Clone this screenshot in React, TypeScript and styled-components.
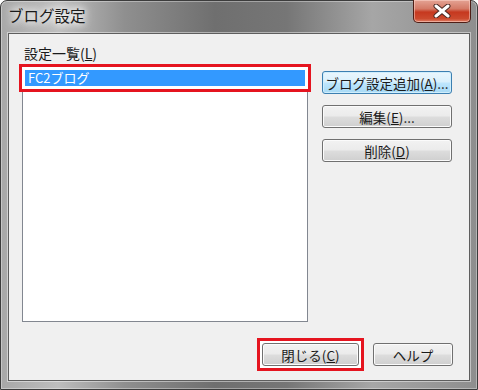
import styled, { createGlobalStyle, css } from "styled-components";

const GlobalStyle = createGlobalStyle`
  body {
    margin: 0;
    font-family: "Noto Sans CJK JP", "Noto Sans", sans-serif;
  }
`;

const Window = styled.div`
  width: 478px;
  height: 390px;
  box-sizing: border-box;
  display: flex;
  flex-direction: column;
  padding: 0 7px 8px;
  border: 1px solid #3c3c3c;
  border-radius: 7px 7px 0 0;
  background: linear-gradient(
    to right,
    #a8a8a8 0%,
    #bdbdbd 12%,
    #8f8f8f 26%,
    #6f6f6f 45%,
    #767676 60%,
    #a6a6a6 78%,
    #8e8e8e 100%
  );
  box-shadow: inset 0 0 0 1px rgba(255, 255, 255, 0.35);
`;

const TitleBar = styled.div`
  height: 32px;
  display: flex;
  justify-content: space-between;
  align-items: flex-start;
`;

const Title = styled.div`
  font-size: 15.5px;
  line-height: 18px;
  padding-top: 5px;
  color: #1a1a1a;
  text-shadow: 0 0 6px #fff, 0 0 10px #fff, 0 0 14px #fff;
`;

const CloseButton = styled.div`
  width: 58px;
  height: 23px;
  margin-top: -1px;
  margin-right: -1px;
  box-sizing: border-box;
  display: flex;
  align-items: center;
  justify-content: center;
  border: 1px solid #4e1e16;
  border-top: none;
  border-radius: 0 0 5px 5px;
  background: linear-gradient(#e4a394 0%, #d47a66 40%, #c6381f 55%, #cc4a2e 85%, #e0826a 100%);
  box-shadow: inset 0 0 0 1px rgba(255, 220, 210, 0.5);
`;

const Client = styled.div`
  flex: 1;
  display: flex;
  flex-direction: column;
  background: #f0f0f0;
  border: 1px solid #5e5e5e;
  padding: 11px 16px 14px 13px;
  box-shadow: 0 0 0 1px rgba(255, 255, 255, 0.45);
`;

const Label = styled.div`
  font-size: 14px;
  line-height: 16px;
  padding-left: 2px;
  margin-bottom: 5px;
  color: #1a1a1a;
`;

const Mnemonic = styled.span`
  text-decoration: underline;
`;

const Body = styled.div`
  display: flex;
  gap: 14px;
`;

const ListBox = styled.div`
  width: 286px;
  height: 256px;
  box-sizing: border-box;
  background: #fff;
  border: 1px solid #828790;
  padding: 3px 2px;
`;

/* red annotation frame drawn over the screenshot */
const Marker = styled.div<{ $gap: number }>`
  border: 3px solid #e5141f;
  padding: ${({ $gap }) => $gap}px;
  margin: ${({ $gap }) => -($gap + 3)}px;
  background: #fff;
`;

const ListItem = styled.div<{ $selected?: boolean }>`
  height: 16px;
  font-size: 13px;
  line-height: 16px;
  padding-left: 3px;
  color: #111;
  ${({ $selected }) =>
    $selected &&
    css`
      background: #3399ff;
      color: #fff;
    `}
`;

const ButtonColumn = styled.div`
  display: flex;
  flex-direction: column;
  gap: 11px;
  margin-top: 5px;
`;

const Button = styled.div<{ $width: number; $default?: boolean }>`
  width: ${({ $width }) => $width}px;
  height: 23px;
  box-sizing: border-box;
  display: flex;
  align-items: center;
  justify-content: center;
  font-size: 13.5px;
  color: #1a1a1a;
  border: 1px solid #707070;
  border-radius: 3px;
  background: linear-gradient(#f2f2f2 0%, #ebebeb 48%, #dddddd 52%, #cfcfcf 100%);
  box-shadow: inset 0 0 0 1px #fbfbfb;
  white-space: nowrap;
  ${({ $default }) =>
    $default &&
    css`
      border-color: #3c7fb1;
      background: linear-gradient(#eaf6fd 0%, #d9f0fc 48%, #bee6fd 52%, #a7d9f5 100%);
      box-shadow: inset 0 0 0 1px #d0eefc;
    `}
`;

const Footer = styled.div`
  display: flex;
  justify-content: flex-end;
  align-items: center;
  gap: 14px;
  margin-top: 21px;
`;

const CloseIcon = () => (
  <svg width="18" height="14" viewBox="0 0 18 14">
    <path d="M3 2 L15 12 M15 2 L3 12" stroke="#4a2a24" strokeWidth="5" strokeLinecap="round" fill="none" />
    <path d="M3 2 L15 12 M15 2 L3 12" stroke="#fff" strokeWidth="3" strokeLinecap="round" fill="none" />
  </svg>
);

export default function App() {
  return (
    <>
      <GlobalStyle />
      <Window>
        <TitleBar>
          <Title>ブログ設定</Title>
          <CloseButton>
            <CloseIcon />
          </CloseButton>
        </TitleBar>
        <Client>
          <Label>
            設定一覧(<Mnemonic>L</Mnemonic>)
          </Label>
          <Body>
            <ListBox>
              <Marker $gap={3}>
                <ListItem $selected>FC2ブログ</ListItem>
              </Marker>
            </ListBox>
            <ButtonColumn>
              <Button $width={130} $default>
                ブログ設定追加(<Mnemonic>A</Mnemonic>)...
              </Button>
              <Button $width={130}>
                編集(<Mnemonic>E</Mnemonic>)...
              </Button>
              <Button $width={130}>
                削除(<Mnemonic>D</Mnemonic>)
              </Button>
            </ButtonColumn>
          </Body>
          <Footer>
            <Marker $gap={2}>
              <Button $width={97}>
                閉じる(<Mnemonic>C</Mnemonic>)
              </Button>
            </Marker>
            <Button $width={80}>ヘルプ</Button>
          </Footer>
        </Client>
      </Window>
    </>
  );
}
